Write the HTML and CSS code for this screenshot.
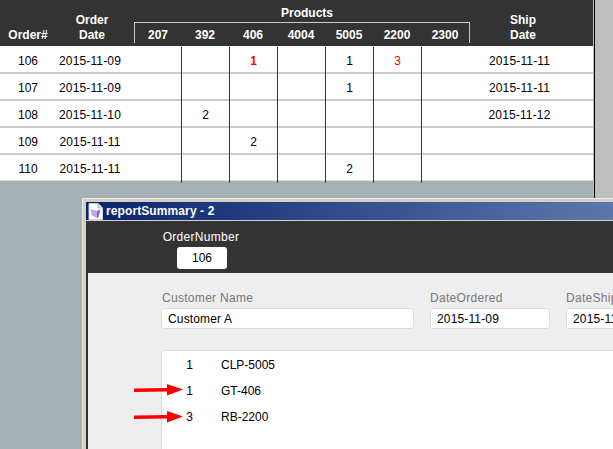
FILE: index.html
```html
<!DOCTYPE html>
<html lang="en">
<head>
    <meta charset="UTF-8">
    <title>Orders</title>
    <link rel="stylesheet" href="styles.css">
</head>
<body>
<div class="page">
    <div class="orders">
        <div class="orders-head">
            <div class="head-cell">Order#</div>
            <div class="head-cell date-head">Order<br>Date</div>
            <div class="products">
                <div class="products-title">Products</div>
                <div class="products-list">
                    <span>207</span>
                    <span>392</span>
                    <span>406</span>
                    <span>4004</span>
                    <span>5005</span>
                    <span>2200</span>
                    <span>2300</span>
                </div>
            </div>
            <div class="head-cell">Ship<br>Date</div>
        </div>
        <div class="orders-body">
            <div class="row">
                <div>106</div>
                <div class="date-cell">2015-11-09</div>
                <div></div>
                <div class="qty"></div>
                <div class="qty alert strong">1</div>
                <div class="qty"></div>
                <div class="qty">1</div>
                <div class="qty alert">3</div>
                <div class="qty"></div>
                <div class="date-cell">2015-11-11</div>
            </div>
            <div class="row">
                <div>107</div>
                <div class="date-cell">2015-11-09</div>
                <div></div>
                <div class="qty"></div>
                <div class="qty"></div>
                <div class="qty"></div>
                <div class="qty">1</div>
                <div class="qty"></div>
                <div class="qty"></div>
                <div class="date-cell">2015-11-11</div>
            </div>
            <div class="row">
                <div>108</div>
                <div class="date-cell">2015-11-10</div>
                <div></div>
                <div class="qty">2</div>
                <div class="qty"></div>
                <div class="qty"></div>
                <div class="qty"></div>
                <div class="qty"></div>
                <div class="qty"></div>
                <div class="date-cell">2015-11-12</div>
            </div>
            <div class="row">
                <div>109</div>
                <div class="date-cell">2015-11-11</div>
                <div></div>
                <div class="qty"></div>
                <div class="qty">2</div>
                <div class="qty"></div>
                <div class="qty"></div>
                <div class="qty"></div>
                <div class="qty"></div>
                <div></div>
            </div>
            <div class="row row-last">
                <div>110</div>
                <div class="date-cell">2015-11-11</div>
                <div></div>
                <div class="qty"></div>
                <div class="qty"></div>
                <div class="qty"></div>
                <div class="qty">2</div>
                <div class="qty"></div>
                <div class="qty"></div>
                <div></div>
            </div>
        </div>
    </div>
</div>

<div class="window">
    <div class="titlebar">
        <svg class="title-icon" width="15" height="17" viewBox="0 0 15 17">
            <path d="M1 .5H10L14.5 5V16.5H1Z" fill="#fff" stroke="#c9d3e6"/>
            <path d="M10 .5V5H14.5" fill="#dfe6f2" stroke="#9fb0cf"/>
            <path d="M2.5 6L9 8V15L4 12.5Z" fill="#b9a6ee"/>
            <path d="M9 8L12.5 6.5L10.5 14L9 15Z" fill="#8a5fd6"/>
        </svg>
        <span class="title-text">reportSummary - 2</span>
    </div>
    <div class="window-body">
        <div class="summary-head">
            <div class="order-number">
                <div class="order-label">OrderNumber</div>
                <div class="order-value">106</div>
            </div>
        </div>
        <div class="summary-main">
            <div class="fields">
                <div class="field field-name">
                    <label>Customer Name</label>
                    <div class="input">Customer A</div>
                </div>
                <div class="field field-date">
                    <label>DateOrdered</label>
                    <div class="input">2015-11-09</div>
                </div>
                <div class="field field-date">
                    <label>DateShipped</label>
                    <div class="input">2015-11-11</div>
                </div>
            </div>
            <div class="items">
                <div class="item"><span class="item-qty">1</span><span>CLP-5005</span></div>
                <div class="item"><span class="item-qty">1</span><span>GT-406</span></div>
                <div class="item"><span class="item-qty">3</span><span>RB-2200</span></div>
            </div>
        </div>
    </div>
    <!-- arrows drawn on top of the window -->
    <svg class="arrow arrow-one" width="49" height="12" viewBox="0 0 49 12"><path d="M0 4.5L33 4V0L49 5.5L33 11.5V7.5L0 8Z" fill="#f00"/></svg>
    <svg class="arrow arrow-two" width="49" height="12" viewBox="0 0 49 12"><path d="M0 4.5L33 4V0L49 5.5L33 11.5V7.5L0 8Z" fill="#f00"/></svg>
</div>
</body>
</html>
```

FILE: styles.css
```css
html, body {
    margin: 0;
    height: 100%;
    overflow: hidden;
}
body {
    font-family: "Liberation Sans", Arial, sans-serif;
    font-size: 12px;
    color: #000;
    background-color: #bfbfbf;
    position: relative;
}
.page {
    box-sizing: border-box;
    width: 595px;
    height: 449px;
    padding-right: 1px;
    border-right: 1px solid #000;
}
.orders {
    height: 100%;
    background-color: #a7b0b5;
}
.orders-head,
.row {
    display: grid;
    grid-template-columns: 56px 77px 48px repeat(6, 48px) 106px 18px;
}
.orders-head {
    grid-template-columns: 56px 77px 337px 106px;
    height: 46px;
    background-color: #333;
    color: #fff;
    font-weight: bold;
    text-align: center;
    line-height: 15px;
}
.head-cell {
    align-self: end;
    padding-bottom: 3px;
}
.date-head {
    padding-right: 5px;
}
.date-cell {
    padding-right: 5px;
    letter-spacing: 0.15px;
}
.row .date-cell:nth-child(2) {
    padding-right: 9px;
}
.products-title {
    box-sizing: border-box;
    height: 22px;
    padding-top: 6px;
    padding-left: 11px;
}
.products-list {
    display: grid;
    grid-template-columns: 46px repeat(6, 48px);
    box-sizing: border-box;
    width: 336px;
    height: 21px;
    margin-left: 1px;
    border: 1px solid #ccc;
    border-bottom: 0;
    line-height: 25px;
}
.orders-body {
    padding-top: 1px;
    background-color: #fff;
}
.row {
    height: 27px;
    line-height: 28px;
    text-align: center;
    background-color: #fff;
    box-shadow: inset 0 -2px 0 #ccc;
}
.row-last {
    height: 26px;
    box-shadow: inset 0 -1px 0 #d8dcde;
}
.qty {
    border-left: 1px solid #333;
}
.alert {
    color: #f00;
}
.strong {
    font-weight: bold;
}

.window {
    position: absolute;
    left: 82px;
    top: 198px;
    right: 0;
    bottom: 0;
    box-sizing: border-box;
    padding: 3px 0 0 3px;
    background-color: #d4d0c8;
    border-top: 1px solid #ece9d8;
    border-left: 1px solid #ece9d8;
}
.titlebar {
    display: flex;
    align-items: center;
    height: 18px;
    padding-left: 2px;
    background: linear-gradient(90deg, #0a246a, #5a78ad);
    color: #fff;
}
.title-text {
    margin-left: 3px;
    font-weight: bold;
    letter-spacing: 0.1px;
}
.window-body {
    margin-top: 1px;
    height: 228px;
    border-left: 2px solid #333;
    background-color: #eee;
}
.summary-head {
    display: flex;
    height: 52px;
    background-color: #333;
}
.order-number {
    width: 78px;
    margin-left: 74px;
    text-align: center;
}
.order-label {
    margin: 9px -3px 0;
    color: #fff;
    line-height: 15px;
    letter-spacing: 0.3px;
}
.order-value {
    width: 50px;
    height: 22px;
    margin: 2px 0 0 15px;
    background-color: #fff;
    border-radius: 3px;
    line-height: 22px;
}
.summary-main {
    padding: 18px 0 0 73px;
}
.fields {
    display: flex;
    gap: 16px;
    width: 600px;
}
.field label {
    display: block;
    margin-bottom: 2px;
    color: #777;
    line-height: 15px;
    letter-spacing: 0.3px;
}
.field-name label {
    padding-left: 1px;
}
.field-name {
    width: 253px;
}
.field-date {
    width: 120px;
}
.input {
    box-sizing: border-box;
    height: 21px;
    padding-left: 6px;
    background-color: #fff;
    border: 1px solid #ddd;
    border-radius: 3px;
    line-height: 20px;
    letter-spacing: 0.15px;
}
.items {
    box-sizing: border-box;
    width: 600px;
    height: 120px;
    margin-top: 21px;
    padding-top: 1px;
    background-color: #fff;
    border: 1px solid #ddd;
    border-radius: 3px;
}
.item {
    display: flex;
    height: 26px;
    line-height: 26px;
}
.item-qty {
    box-sizing: border-box;
    width: 59px;
    padding-right: 28px;
    text-align: right;
}
.arrow {
    position: absolute;
    left: 51px;
}
.arrow-one {
    top: 185px;
}
.arrow-two {
    top: 212px;
}
```
